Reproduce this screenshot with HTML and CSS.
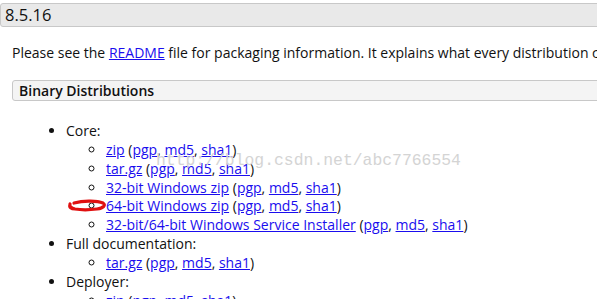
FILE: index.html
```html
<!DOCTYPE html>
<html lang="en">
<head>
    <meta charset="UTF-8">
    <title>Apache Tomcat 8.5.16</title>
    <link rel="stylesheet" href="styles.css">
</head>
<body>
    <h3 class="versao">8.5.16</h3>
    <div class="conteudo">
        <p class="intro">Please see the <a href="#">README</a> file for packaging information. It explains what every distribution contains.</p>
        <div class="caixa">Binary Distributions</div>
        <ul class="lista">
            <li>Core:
                <ul class="sublista">
                    <li><a href="#">zip</a> (<a href="#">pgp</a>, <a href="#">md5</a>, <a href="#">sha1</a>)</li>
                    <li><a href="#">tar.gz</a> (<a href="#">pgp</a>, <a href="#">md5</a>, <a href="#">sha1</a>)</li>
                    <li><a href="#">32-bit Windows zip</a> (<a href="#">pgp</a>, <a href="#">md5</a>, <a href="#">sha1</a>)</li>
                    <li class="marcado"><svg class="rabisco" width="42" height="14" viewBox="0 0 42 14">
                            <path d="M8 4 C16 2 30 1 37 4 C40 6 38 9 31 10 C23 11 15 11 9 10 C5 9 3 7 4 5 M4 6 C3 8 5 10 9 10" fill="none" stroke="#e01010" stroke-width="3.2" stroke-linecap="round"/>
                        </svg><a href="#">64-bit Windows zip</a> (<a href="#">pgp</a>, <a href="#">md5</a>, <a href="#">sha1</a>)</li>
                    <li><a href="#">32-bit/64-bit Windows Service Installer</a> (<a href="#">pgp</a>, <a href="#">md5</a>, <a href="#">sha1</a>)</li>
                </ul>
            </li>
            <li>Full documentation:
                <ul class="sublista">
                    <li><a href="#">tar.gz</a> (<a href="#">pgp</a>, <a href="#">md5</a>, <a href="#">sha1</a>)</li>
                </ul>
            </li>
            <li>Deployer:
                <ul class="sublista">
                    <li><a href="#">zip</a> (<a href="#">pgp</a>, <a href="#">md5</a>, <a href="#">sha1</a>)</li>
                </ul>
            </li>
        </ul>
    </div>
    <!-- marca d'agua do blog -->
    <div class="marca">http://blog.csdn.net/abc7766554</div>
</body>
</html>
```

FILE: styles.css
```css
body {
    margin: 0;
    font-family: "Open Sans", sans-serif;
    font-size: 14px;
    color: #111;
    overflow: hidden;
    position: relative;
}

a {
    color: #1a0dee;
}

.versao {
    margin: 3px -20px 0 0;
    height: 22px;
    background: #e9e9e9;
    border: 1px solid #c8c8c8;
    border-radius: 3px;
    padding: 0 4px;
    font-size: 16.5px;
    font-weight: normal;
    line-height: 22px;
}

.conteudo {
    padding-left: 12px;
}

.intro {
    margin: 16px 0 0 0;
    line-height: 19px;
    white-space: nowrap;
}

.caixa {
    margin: 18px -20px 0 0;
    height: 19px;
    background: #f4f4f4;
    border: 1px solid #c8c8c8;
    border-radius: 3px;
    padding: 0 6px;
    font-weight: 600;
    line-height: 19px;
}

.lista {
    margin: 21px 0 0 0;
    padding-left: 54px;
    line-height: 18.85px;
}

.sublista {
    margin: 0;
    padding-left: 40px;
    list-style: circle;
    white-space: nowrap;
}

.sublista li {
    height: 18.85px;
}

.marcado {
    position: relative;
}

.rabisco {
    position: absolute;
    left: -40px;
    top: 2px;
}

.marca {
    position: absolute;
    left: 156px;
    top: 151px;
    font-family: "Liberation Mono", monospace;
    font-size: 16.4px;
    color: #d4d4d4;
    white-space: nowrap;
}
```
